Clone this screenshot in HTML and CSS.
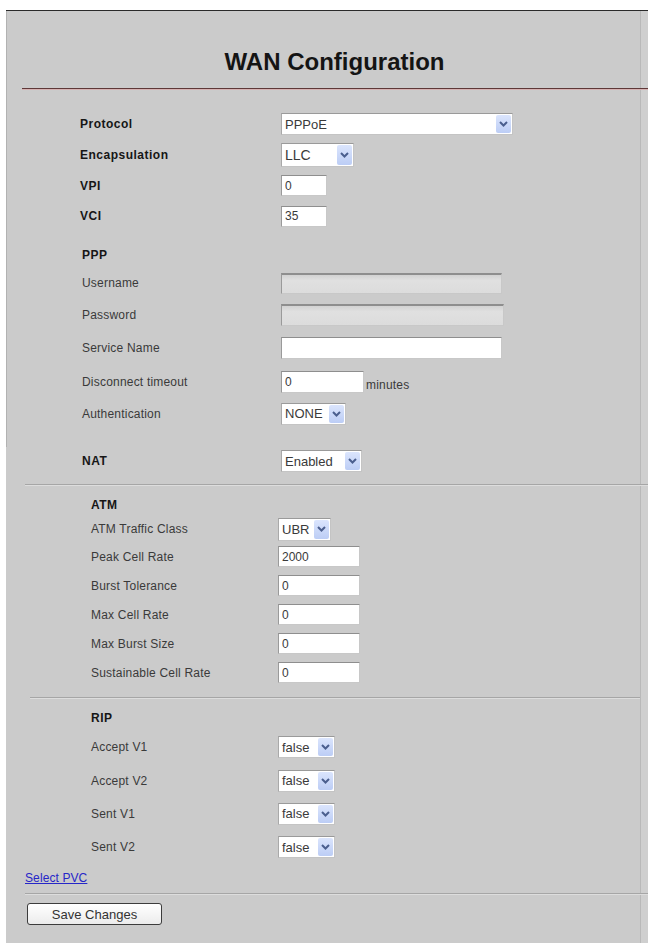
FILE: index.html
```html
<!DOCTYPE html>
<html>
<head>
<meta charset="utf-8">
<title>WAN Configuration</title>
<link rel="stylesheet" href="styles.css">
</head>
<body>
<div class="panel">
  <div class="upper">
    <h1 class="title">WAN Configuration</h1>
    <div class="rule-red"></div>

    <div class="sec sec-main">
      <div class="row h30"><span class="lbl b">Protocol</span>
        <div class="sel w232 c22"><span class="val">PPPoE</span><span class="btn"><svg width="9" height="6" viewBox="0 0 9 6"><path d="M1 1 L4.5 4.5 L8 1" fill="none" stroke="#4b5f8e" stroke-width="2"/></svg></span></div>
      </div>
      <div class="row h31"><span class="lbl b">Encapsulation</span>
        <div class="sel w73 c24 big"><span class="val">LLC</span><span class="btn"><svg width="9" height="6" viewBox="0 0 9 6"><path d="M1 1 L4.5 4.5 L8 1" fill="none" stroke="#4b5f8e" stroke-width="2"/></svg></span></div>
      </div>
      <div class="row h31"><span class="lbl b">VPI</span><input class="inp w46 c21" value="0"></div>
      <div class="row h30"><span class="lbl b">VCI</span><input class="inp w46 c21" value="35"></div>
    </div>

    <div class="sec sec-ppp">
      <div class="row h24"><span class="lbl b">PPP</span></div>
      <div class="row h32"><span class="lbl">Username</span><input class="inp dis w221 c21" value="" disabled></div>
      <div class="row h32"><span class="lbl">Password</span><input class="inp dis w223 c22" value="" disabled></div>
      <div class="row h34"><span class="lbl">Service Name</span><input class="inp w221 c22" value=""></div>
      <div class="row h33"><span class="lbl">Disconnect timeout</span><input class="inp w83 c22" value="0"><span class="unit">minutes</span></div>
      <div class="row h31"><span class="lbl">Authentication</span>
        <div class="sel w65 c22"><span class="val">NONE</span><span class="btn"><svg width="9" height="6" viewBox="0 0 9 6"><path d="M1 1 L4.5 4.5 L8 1" fill="none" stroke="#4b5f8e" stroke-width="2"/></svg></span></div>
      </div>
    </div>
    <div class="spacer18"></div>
  </div>

  <div class="sec sec-ppp">
    <div class="row h28"><span class="lbl b">NAT</span>
      <div class="sel w81 c22"><span class="val">Enabled</span><span class="btn"><svg width="9" height="6" viewBox="0 0 9 6"><path d="M1 1 L4.5 4.5 L8 1" fill="none" stroke="#4b5f8e" stroke-width="2"/></svg></span></div>
    </div>
  </div>

  <div class="sep sep-a"></div>

  <div class="sec sec-atm">
    <div class="row h22"><span class="lbl b">ATM</span></div>
    <div class="row h26"><span class="lbl">ATM Traffic Class</span>
      <div class="sel w53 c23"><span class="val">UBR</span><span class="btn"><svg width="9" height="6" viewBox="0 0 9 6"><path d="M1 1 L4.5 4.5 L8 1" fill="none" stroke="#4b5f8e" stroke-width="2"/></svg></span></div>
    </div>
    <div class="row h29"><span class="lbl">Peak Cell Rate</span><input class="inp w82 c21" value="2000"></div>
    <div class="row h29"><span class="lbl">Burst Tolerance</span><input class="inp w82 c21" value="0"></div>
    <div class="row h29"><span class="lbl">Max Cell Rate</span><input class="inp w82 c21" value="0"></div>
    <div class="row h29"><span class="lbl">Max Burst Size</span><input class="inp w82 c21" value="0"></div>
    <div class="row h29"><span class="lbl">Sustainable Cell Rate</span><input class="inp w82 c21" value="0"></div>
  </div>

  <div class="sep sep-b"></div>

  <div class="sec sec-rip">
    <div class="row h25"><span class="lbl b">RIP</span></div>
    <div class="row h34"><span class="lbl">Accept V1</span>
      <div class="sel w57 c22"><span class="val">false</span><span class="btn"><svg width="9" height="6" viewBox="0 0 9 6"><path d="M1 1 L4.5 4.5 L8 1" fill="none" stroke="#4b5f8e" stroke-width="2"/></svg></span></div>
    </div>
    <div class="row h33"><span class="lbl">Accept V2</span>
      <div class="sel w57 c22"><span class="val">false</span><span class="btn"><svg width="9" height="6" viewBox="0 0 9 6"><path d="M1 1 L4.5 4.5 L8 1" fill="none" stroke="#4b5f8e" stroke-width="2"/></svg></span></div>
    </div>
    <div class="row h33"><span class="lbl">Sent V1</span>
      <div class="sel w57 c22"><span class="val">false</span><span class="btn"><svg width="9" height="6" viewBox="0 0 9 6"><path d="M1 1 L4.5 4.5 L8 1" fill="none" stroke="#4b5f8e" stroke-width="2"/></svg></span></div>
    </div>
    <div class="row h34"><span class="lbl">Sent V2</span>
      <div class="sel w57 c22"><span class="val">false</span><span class="btn"><svg width="9" height="6" viewBox="0 0 9 6"><path d="M1 1 L4.5 4.5 L8 1" fill="none" stroke="#4b5f8e" stroke-width="2"/></svg></span></div>
    </div>
  </div>

  <div class="pvc"><a href="#" class="link">Select PVC</a></div>

  <div class="sep sep-c"></div>

  <div class="actions"><button class="save" type="button">Save Changes</button></div>
</div>
</body>
</html>
```

FILE: styles.css
```css
* { box-sizing: border-box; }

html, body {
  margin: 0;
  padding: 0;
  background: #ffffff;
}

body {
  width: 648px;
  height: 945px;
  overflow: hidden;
  font-family: "Liberation Sans", Arial, sans-serif;
  color: #2a2a2a;
}

.panel {
  margin: 10px 0 0 6px;
  height: 933px;
  border-top: 1px solid #2a2a2a;
  background: linear-gradient(to right, #cbcbcb 634px, #b9b9b9 634px, #b9b9b9 635px, #cfcfcf 635px);
}

.upper {
  box-shadow: inset 1px 0 #b2b2b2;
  padding-top: 37px;
}

.title {
  margin: 0 0 0 15px;
  font-size: 24px;
  line-height: 28px;
  font-weight: bold;
  text-align: center;
  color: #141414;
}

.rule-red {
  margin: 12px 0 0 16px;
  height: 2px;
  border-top: 1px solid #5e3838;
  border-bottom: 1px solid #d6b2b2;
}

.sec-main { padding: 19px 0 0 74px; }
.sec-main .lbl { width: 201px; }

.sec-ppp { padding-left: 76px; }
.sec-ppp .lbl { width: 199px; }
.upper .sec-ppp { margin-top: 12px; }

.spacer18 { height: 18px; }

.sec-atm { padding: 8px 0 0 85px; }
.sec-atm .lbl { width: 187px; }

.sec-rip { padding: 6px 0 0 85px; }
.sec-rip .lbl { width: 187px; }

.row {
  display: flex;
  align-items: center;
}

/* row heights */
.h22 { height: 22px; }
.h24 { height: 24px; }
.h25 { height: 25px; }
.h26 { height: 26px; }
.h28 { height: 28px; }
.h29 { height: 29px; }
.h30 { height: 30px; }
.h31 { height: 31px; }
.h32 { height: 32px; }
.h33 { height: 33px; }
.h34 { height: 34px; }

/* control heights */
.c21 { height: 21px; }
.c22 { height: 22px; }
.c23 { height: 23px; }
.c24 { height: 24px; }

.lbl {
  flex: none;
  font-size: 12px;
  letter-spacing: 0.2px;
  color: #3a3a3a;
}

.lbl.b {
  font-weight: bold;
  letter-spacing: 0.5px;
  color: #161616;
}

.w46 { width: 46px; }
.w53 { width: 53px; }
.w57 { width: 57px; }
.w65 { width: 65px; }
.w73 { width: 73px; }
.w81 { width: 81px; }
.w82 { width: 82px; }
.w83 { width: 83px; }
.w221 { width: 221px; }
.w223 { width: 223px; }
.w232 { width: 232px; }

.sel {
  flex: none;
  display: flex;
  align-items: stretch;
  background: #ffffff;
  border: 1px solid #a9a9a9;
  border-top-color: #9a9a9a;
  border-right-color: #c4c4c4;
  border-bottom-color: #c4c4c4;
  padding: 1px;
}

.sel .val {
  flex: 1;
  display: flex;
  align-items: center;
  padding-left: 2px;
  font-size: 13px;
  color: #3a3a3a;
  overflow: hidden;
}

.sel.big .val { font-size: 14px; }

.sel .btn {
  flex: none;
  width: 15px;
  display: flex;
  align-items: center;
  justify-content: center;
  background: linear-gradient(#dbe5fd, #bccdf5);
  border-radius: 2px;
}

.inp {
  flex: none;
  margin: 0;
  padding: 0 0 0 3px;
  font-family: "Liberation Sans", Arial, sans-serif;
  font-size: 12px;
  color: #3a3a3a;
  background: #ffffff;
  border: 1px solid #a8a8a8;
  border-top-color: #8e8e8e;
  border-left-color: #9a9a9a;
  border-right-color: #c8c8c8;
  border-bottom-color: #c8c8c8;
  outline: none;
}

.inp.dis {
  background: linear-gradient(#d2d2d2, #e0e0e0 30%, #dcdcdc);
  border-top: 2px solid #8e8e8e;
}

.unit {
  margin-left: 2px;
  padding-top: 6px;
  font-size: 12px;
  letter-spacing: 0.2px;
  color: #3a3a3a;
}

.sep {
  height: 2px;
  border-top: 1px solid #a6a6a6;
  border-bottom: 1px solid #dddddd;
}

.sep-a { margin: 9px 0 0 19px; }
.sep-b { margin: 10px 8px 0 24px; }
.sep-c { margin: 7px 0 0 19px; }

.pvc {
  margin-top: 6px;
  height: 16px;
  padding-left: 19px;
  display: flex;
  align-items: center;
}

.link {
  font-size: 12px;
  color: #2626c8;
  text-decoration: underline;
  letter-spacing: 0.1px;
}

.actions {
  padding: 8px 0 0 21px;
}

.save {
  display: block;
  width: 135px;
  height: 22px;
  margin: 0;
  padding: 0;
  font-family: "Liberation Sans", Arial, sans-serif;
  font-size: 13px;
  color: #333333;
  background: linear-gradient(#ffffff, #ececec);
  border: 1px solid #3c3c3c;
  border-radius: 3px;
}
```
